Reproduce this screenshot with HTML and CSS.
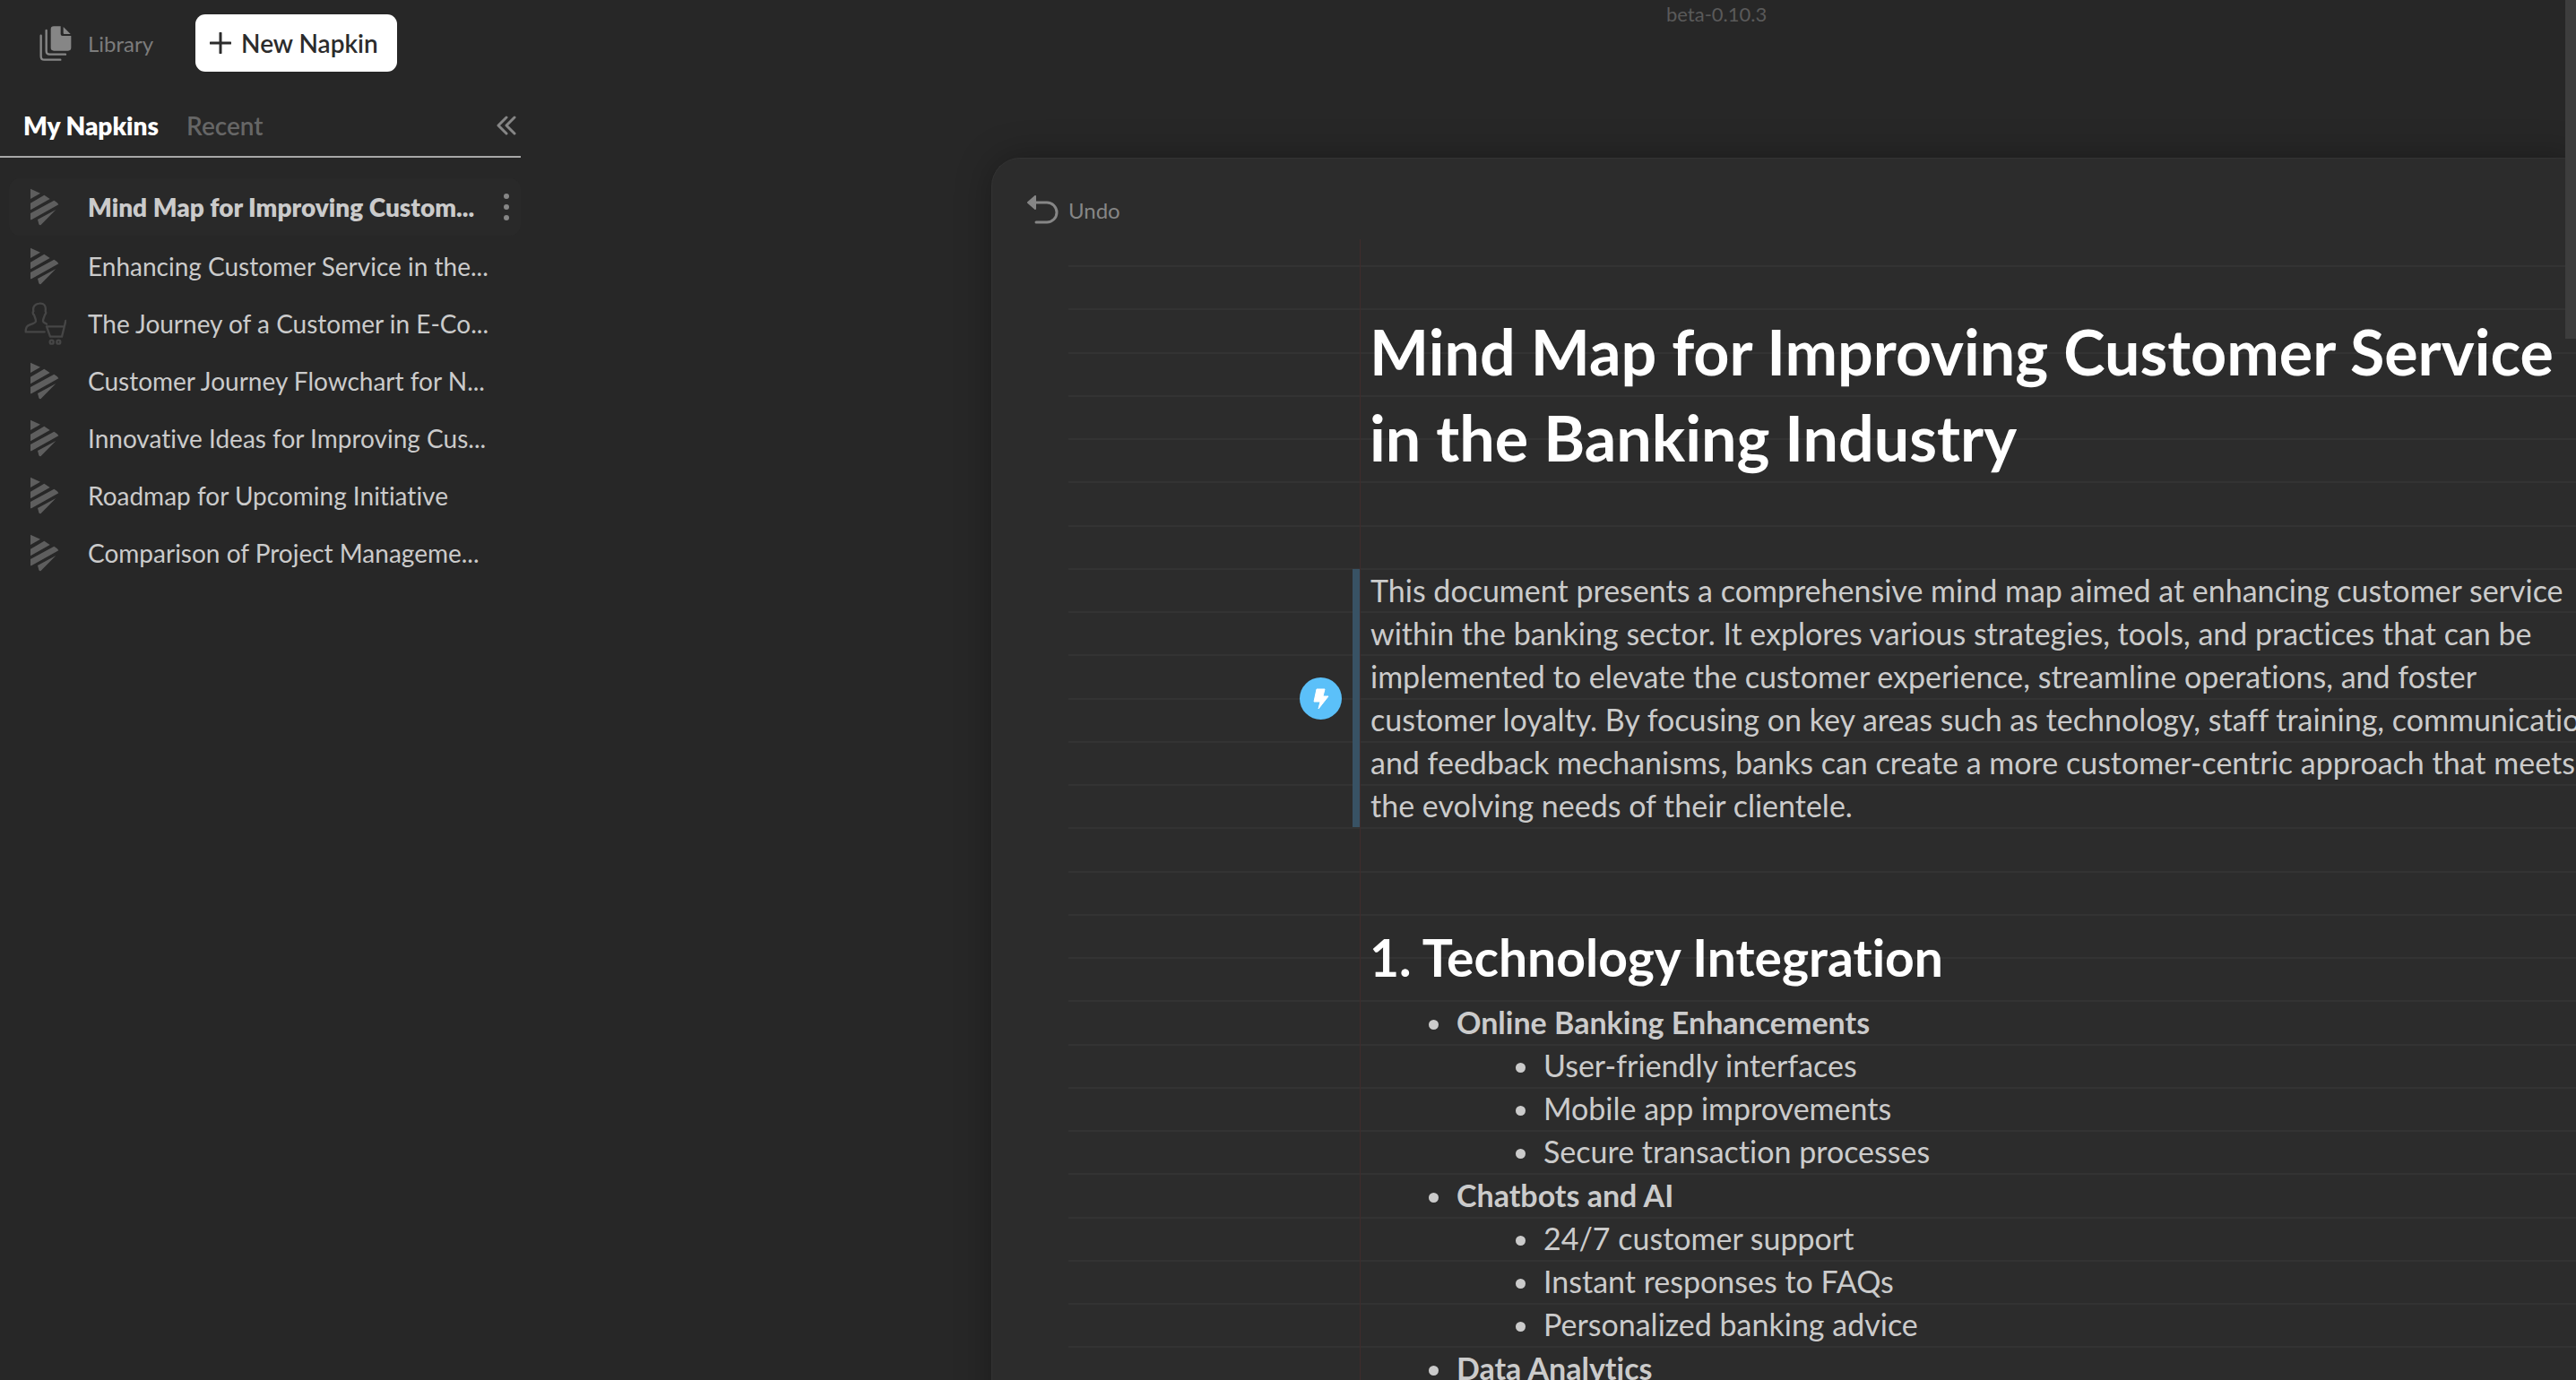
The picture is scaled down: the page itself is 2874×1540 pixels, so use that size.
FILE: index.html
```
<!DOCTYPE html>
<html lang="en">
<head>
<meta charset="utf-8">
<title>Mind Map for Improving Customer Service</title>
<link rel="stylesheet" href="styles.css">
</head>
<body>
<svg width="0" height="0" class="sprite" aria-hidden="true">
  <symbol id="doc" viewBox="0 0 144 144">
    <path fill="#5e5e5e" d="M24 11 57 26 24 45ZM24 59 70 32 89 45 24 82ZM24 93 103 50Q118 60 118 64L27 115 24 115ZM48 114 109 81 58 133Q53 133 52 129Z"/>
  </symbol>
  <symbol id="shopper" viewBox="0 0 144 144">
    <g fill="none" stroke="#464646" stroke-width="7" stroke-linecap="round" stroke-linejoin="round">
      <path d="M71 100H8C8 84 12 80 22 76 36 71 41 70 42 64 42 55 37 49 36 43 32 41 31 34 34 31 31 16 39 6 53 5 69 3 77 12 74 31 77 34 75 41 72 43 71 49 66 55 66 64 67 70 72 69 78 74"/>
      <path d="M142 63 129 116H90L78 82H135"/>
      <circle cx="95" cy="134" r="6"/><circle cx="118" cy="134" r="6"/>
    </g>
  </symbol>
</svg>
<div class="app">
  <aside class="sidebar">
    <div class="actions">
      <a class="library" href="#">
        <svg width="36" height="40" viewBox="0 0 108 120" aria-hidden="true">
          <path fill="#868686" d="M48 4H71V30Q71 36 77 36H106V76Q106 86 96 86H48Q38 86 38 76V14Q38 4 48 4ZM80 6 104 30H83Q80 30 80 27Z"/>
          <path fill="none" stroke="#868686" stroke-width="7" stroke-linecap="round" d="M23 18V87Q23 98 34 98H87M5 35V104Q5 116 16 116H70"/>
        </svg>
        <span>Library</span>
      </a>
      <button class="new" type="button">
        <svg width="24" height="24" viewBox="0 0 24 24" aria-hidden="true"><path d="M12 1V23M1 12H23" stroke="#2c2c2c" stroke-width="3" stroke-linecap="round"/></svg>
        New Napkin
      </button>
    </div>
    <div class="tabs">
      <button class="tab active" type="button">My Napkins</button>
      <button class="tab" type="button">Recent</button>
      <button class="collapse" type="button" aria-label="Collapse sidebar">
        <svg width="22" height="22" viewBox="0 0 22 22" fill="none" stroke="#868686" stroke-width="3" stroke-linecap="round" stroke-linejoin="round" aria-hidden="true"><path d="M11 2 2 11 11 20M20 2 11 11 20 20"/></svg>
      </button>
    </div>
    <nav class="napkins" aria-label="Napkins">
      <div class="row current">
        <a href="#"><svg class="thumb"><use href="#doc"/></svg>Mind Map for Improving Custom...</a>
        <button class="more" type="button" aria-label="More options">
          <svg width="6" height="30" viewBox="0 0 6 30" fill="#868686" aria-hidden="true"><circle cx="3" cy="3" r="3"/><circle cx="3" cy="15" r="3"/><circle cx="3" cy="27" r="3"/></svg>
        </button>
      </div>
      <div class="row"><a href="#"><svg class="thumb"><use href="#doc"/></svg>Enhancing Customer Service in the...</a></div>
      <div class="row"><a href="#"><svg class="thumb"><use href="#shopper"/></svg>The Journey of a Customer in E-Co...</a></div>
      <div class="row"><a href="#"><svg class="thumb"><use href="#doc"/></svg>Customer Journey Flowchart for N...</a></div>
      <div class="row"><a href="#"><svg class="thumb"><use href="#doc"/></svg>Innovative Ideas for Improving Cus...</a></div>
      <div class="row"><a href="#"><svg class="thumb"><use href="#doc"/></svg>Roadmap for Upcoming Initiative</a></div>
      <div class="row"><a href="#"><svg class="thumb"><use href="#doc"/></svg>Comparison of Project Manageme...</a></div>
    </nav>
  </aside>
  <main class="stage">
    <p class="version">beta-0.10.3</p>
    <section class="card">
      <button class="undo" type="button">
        <svg width="36" height="32" viewBox="0 0 36 32" aria-hidden="true">
          <path fill="#868686" stroke="#868686" stroke-width="2" stroke-linejoin="round" d="M1 8 9 1V15Z"/>
          <path fill="none" stroke="#868686" stroke-width="3" stroke-linecap="round" d="M9 8H22A11 11 0 0 1 22 30H10"/>
        </svg>
        Undo
      </button>
      <article class="sheet">
        <h1>Mind Map for Improving Customer Service in the Banking Industry</h1>
        <div class="block">
          <button class="spark" type="button" aria-label="Generate visual">
            <svg width="18" height="24" viewBox="0 0 18 24" aria-hidden="true"><path fill="#fff" stroke="#fff" stroke-width="1" stroke-linejoin="round" d="M4 1H13L11 9H17L6 23 8 15H1Z"/></svg>
          </button>
          <p>This document presents a comprehensive mind map aimed at enhancing customer service<br>
          within the banking sector. It explores various strategies, tools, and practices that can be<br>
          implemented to elevate the customer experience, streamline operations, and foster<br>
          customer loyalty. By focusing on key areas such as technology, staff training, communication,<br>
          and feedback mechanisms, banks can create a more customer-centric approach that meets<br>
          the evolving needs of their clientele.</p>
        </div>
        <h2>1. Technology Integration</h2>
        <ul class="topics">
          <li><strong>Online Banking Enhancements</strong>
            <ul><li>User-friendly interfaces</li><li>Mobile app improvements</li><li>Secure transaction processes</li></ul>
          </li>
          <li><strong>Chatbots and AI</strong>
            <ul><li>24/7 customer support</li><li>Instant responses to FAQs</li><li>Personalized banking advice</li></ul>
          </li>
          <li><strong>Data Analytics</strong></li>
        </ul>
      </article>
    </section>
  </main>
  <div class="scroll-thumb"></div>
</div>
</body>
</html>
```
FILE: styles.css
```
* { box-sizing: border-box; }
body {
  margin: 0;
  background: #272727;
  color: #cbcbcb;
  font-family: Lato, "Open Sans", sans-serif;
  font-variant-ligatures: none;
}
button {
  margin: 0;
  padding: 0;
  border: 0;
  background: none;
  color: inherit;
  font: inherit;
}
a { color: inherit; text-decoration: none; }
h1, h2, p, ul { margin: 0; padding: 0; }
.sprite { position: absolute; }
.app {
  position: relative;
  display: flex;
  height: 100vh;
  overflow: hidden;
}

/* Sidebar */
.sidebar { flex: none; width: 581px; padding-top: 16px; }
.actions {
  display: flex;
  align-items: center;
  gap: 47px;
  padding-left: 44px;
}
.library {
  display: flex;
  align-items: center;
  gap: 18px;
  color: #7c7c7c;
  font-size: 24px;
}
.new {
  display: flex;
  align-items: center;
  gap: 11px;
  height: 64px;
  padding: 0 21px 0 16px;
  border-radius: 11px;
  background: #fff;
  color: #2c2c2c;
  font-size: 28px;
  font-weight: 600;
}
.tabs {
  display: flex;
  align-items: center;
  gap: 31px;
  height: 72px;
  margin-top: 24px;
  padding: 2px 5px 0 26px;
  border-bottom: 2px solid #a8a8a8;
}
.tab { color: #666; font-size: 28px; font-weight: 600; }
.tab.active { color: #fff; font-weight: 800; }
.collapse { display: flex; margin-left: auto; }
.napkins { padding: 23px 0 0 10px; }
.row {
  display: flex;
  align-items: center;
  height: 64px;
  padding: 0 13px 0 16px;
  border-radius: 12px;
  font-size: 28px;
}
.row a {
  display: flex;
  align-items: center;
  gap: 24px;
  white-space: nowrap;
}
.row.current { margin-bottom: 2px; background: #292929; font-weight: 800; }
.thumb { flex: none; width: 48px; height: 48px; }
.more { display: flex; margin-left: auto; }

/* Document */
.stage { flex: 1; min-width: 0; }
.version {
  height: 176px;
  padding: 0 0 0 1278px;
  color: #5a5a5a;
  font-size: 22px;
  line-height: 32px;
}
.card {
  margin-left: 525px;
  min-height: 100vh;
  border: 1px solid #333;
  border-width: 1px 0 0 1px;
  border-radius: 32px 0 0 0;
  background: #2c2c2c;
  box-shadow: 0 0 40px rgba(0, 0, 0, 0.3);
}
.undo {
  display: flex;
  align-items: center;
  gap: 10px;
  height: 36px;
  margin: 39px 0 15px 39px;
  color: #868686;
  font-size: 24px;
}
.sheet {
  margin-left: 85px;
  padding: 77px 0 96px 336px;
  background:
    linear-gradient(#402c2c, #402c2c) 325px 0 / 1px 100% no-repeat,
    linear-gradient(#333 2px, transparent 2px, transparent 48px, #333 48px, #333 50px, transparent 50px, transparent 97px, #333 97px, #333 99px, transparent 99px, transparent 145px, #333 145px, #333 147px, transparent 147px) 0 29px / 100% 193px;
}
h1, h2 { color: #fff; font-weight: 700; line-height: 96px; }
h1 { width: 1366px; font-size: 70px; }
h2 { margin-top: 97px; font-size: 57px; }
.block {
  position: relative;
  margin: 99px 0 0 -19px;
  padding-left: 12px;
  border-left: 8px solid #385264;
}
.block p { font-size: 34px; line-height: 48px; white-space: nowrap; }
.spark {
  position: absolute;
  top: 121px;
  left: -67px;
  display: flex;
  align-items: center;
  justify-content: center;
  width: 47px;
  height: 47px;
  border-radius: 50%;
  background: #5bc0f9;
}
.topics { margin-top: 1px; font-size: 34px; line-height: 48px; }
.topics, .topics ul { list-style: none; padding-left: 97px; }
.topics > li { margin-bottom: 1px; }
.topics li::before {
  content: "";
  float: left;
  width: 11px;
  height: 11px;
  margin: 21px 0 0 -31px;
  border-radius: 50%;
  background: #cbcbcb;
}
.scroll-thumb {
  position: absolute;
  top: 0;
  right: 0;
  width: 12px;
  height: 378px;
  background: #3d3d3d;
}
```
